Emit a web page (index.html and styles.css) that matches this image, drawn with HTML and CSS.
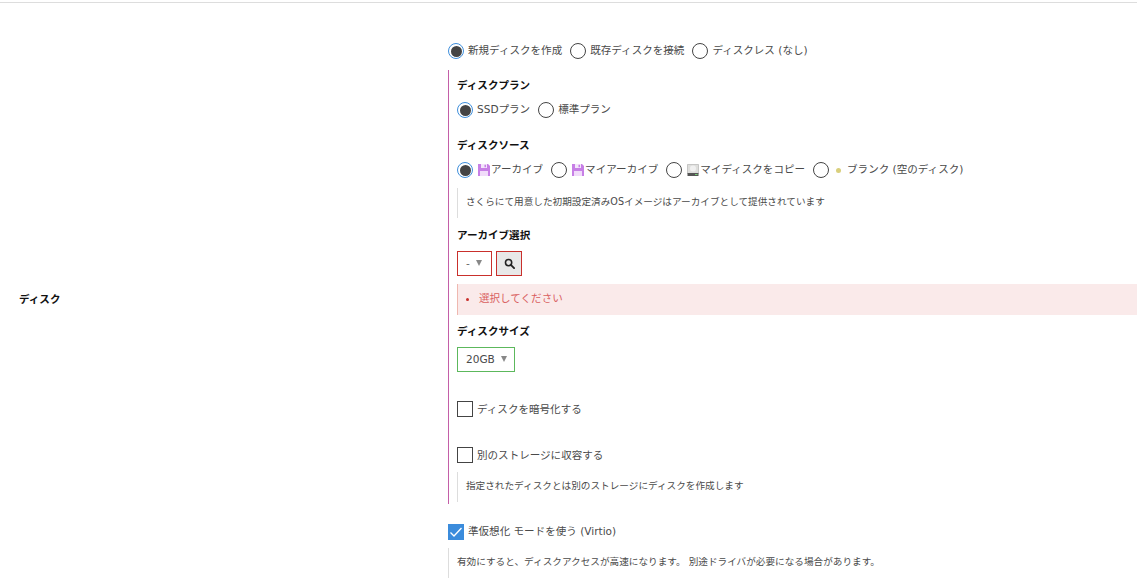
FILE: index.html
```html
<!DOCTYPE html>
<html lang="ja">
<head>
<meta charset="utf-8">
<title>ディスク</title>
<link rel="stylesheet" href="styles.css">
</head>
<body>
<div class="page">
  <div class="form-row">
    <div class="row-label">ディスク</div>
    <div class="row-body">
      <div class="radio-line top-line">
        <span class="radio on"></span><span class="opt">新規ディスクを作成</span>
        <span class="radio"></span><span class="opt">既存ディスクを接続</span>
        <span class="radio"></span><span class="opt">ディスクレス (なし)</span>
      </div>
      <div class="panel">
        <div class="heading h-plan">ディスクプラン</div>
        <div class="radio-line">
          <span class="radio on"></span><span class="opt">SSDプラン</span>
          <span class="radio"></span><span class="opt">標準プラン</span>
        </div>
        <div class="heading h-source">ディスクソース</div>
        <div class="radio-line">
          <span class="radio on"></span>
          <svg class="ico" viewBox="0 0 12 12"><path d="M0 0h10l2 2v10H0z" fill="#c77fe6"/><path d="M3 0h6v4H3z" fill="#f4e6fb"/><path d="M6.500 .8h1.500v2.400H6.500z" fill="#c77fe6"/><path d="M2 7h8v5H2z" fill="#f1dcfa"/></svg><span class="opt tight">アーカイブ</span>
          <span class="radio"></span>
          <svg class="ico" viewBox="0 0 12 12"><path d="M0 0h10l2 2v10H0z" fill="#c77fe6"/><path d="M3 0h6v4H3z" fill="#f4e6fb"/><path d="M6.500 .8h1.500v2.400H6.500z" fill="#c77fe6"/><path d="M2 7h8v5H2z" fill="#f1dcfa"/></svg><span class="opt tight">マイアーカイブ</span>
          <span class="radio"></span>
          <svg class="ico" viewBox="0 0 12 12"><path d="M.5 .5h11v9H.5z" fill="#dededc" stroke="#aaa" stroke-width=".6"/><circle cx="6" cy="4.500" r="3" fill="#f0f0f0"/><path d="M.5 9h11v3H.5z" fill="#555"/><path d="M8 10h2.500v1H8z" fill="#7c7"/></svg><span class="opt tight">マイディスクをコピー</span>
          <span class="radio"></span>
          <span class="dot"></span><span class="opt">ブランク (空のディスク)</span>
        </div>
        <div class="note note-source">さくらにて用意した初期設定済みOSイメージはアーカイブとして提供されています</div>
        <div class="heading h-archive">アーカイブ選択</div>
        <div class="select-line">
          <div class="select invalid sel-archive"><span>-</span><span class="caret"></span></div>
          <button class="search" type="button" aria-label="検索"><svg viewBox="0 0 12 12"><circle cx="5" cy="5" r="3.400" fill="none" stroke="#222" stroke-width="1.700"/><path d="M7.500 7.500 11 11" stroke="#222" stroke-width="2" stroke-linecap="round"/></svg></button>
        </div>
        <div class="error"><span class="bullet"></span><span class="error-text">選択してください</span></div>
        <div class="heading h-size">ディスクサイズ</div>
        <div class="select valid sel-size"><span>20GB</span><span class="caret"></span></div>
        <div class="check-line c-encrypt"><span class="check"></span><span class="opt">ディスクを暗号化する</span></div>
        <div class="check-line c-storage"><span class="check"></span><span class="opt">別のストレージに収容する</span></div>
        <div class="note note-storage">指定されたディスクとは別のストレージにディスクを作成します</div>
      </div>
      <div class="check-line c-virtio">
        <span class="check on"><svg viewBox="0 0 16 16"><path d="M2.500 8.500 6 12l7.500-8" fill="none" stroke="#fff" stroke-width="1.300"/></svg></span><span class="opt">準仮想化 モードを使う (Virtio)</span>
      </div>
      <div class="note note-virtio">有効にすると、ディスクアクセスが高速になります。 別途ドライバが必要になる場合があります。</div>
    </div>
  </div>
</div>
</body>
</html>
```

FILE: styles.css
```css
* { box-sizing: border-box; }
html, body { margin: 0; padding: 0; background: #fff; }
body {
  font-family: "DejaVu Sans", "Noto Sans CJK JP", sans-serif;
  font-size: 10.55px;
  color: #4a4a4a;
  overflow: hidden;
  height: 585px;
}
.page { border-top: 1px solid #ddd; margin-top: 2px; }
.form-row { display: flex; padding-top: 39px; }
.row-label {
  width: 448px;
  padding-left: 19px;
  display: flex;
  align-items: center;
  align-self: flex-start;
  height: 438px;
  padding-top: 74px;
  font-weight: 700;
  color: #111;
}
.row-body { flex: 1; min-width: 0; }
.radio-line { display: flex; align-items: center; height: 18px; white-space: nowrap; }
.radio {
  width: 16px; height: 16px; border-radius: 50%;
  border: 1px solid #444; background: #fff;
  flex: none; position: relative; margin-right: 4px;
}
.radio.on { border: 1.500px solid #3f8fdc; }
.radio.on::after {
  content: ""; position: absolute; inset: 1.500px;
  border-radius: 50%; background: #444;
}
.opt { margin-right: 8px; line-height: 18px; padding-bottom: 2px; }
.opt.tight { margin-left: 1px; }
.ico { width: 12px; height: 12px; flex: none; margin-left: 1px; }
.dot { width: 5px; height: 5px; border-radius: 50%; background: #d9cf7c; margin: 0 6px 0 3px; flex: none; }
.panel {
  border-left: 1px solid #c45fa8;
  margin-top: 10px;
  padding-left: 8px;
  height: 434px;
  display: flow-root;
}
.heading { font-weight: 700; color: #111; line-height: 16px; }
.h-plan { margin-top: 7px; }
.panel .radio-line { margin-top: 8px; }
.h-source { margin-top: 18px; }
.note {
  border-left: 1px solid #ddd;
  padding-left: 8px;
  height: 30px;
  line-height: 28px;
  font-size: 9.65px;
  white-space: nowrap;
}
.note-source { margin-top: 9px; }
.h-archive { margin-top: 9px; }
.select-line { display: flex; gap: 4px; margin-top: 8px; }
.select {
  height: 25px; border: 1px solid #ccc; display: flex; align-items: center;
  padding: 0 0 2px 8px; gap: 6px; background: #fff;
}
.select.invalid { border-color: #c9302c; color: #666; }
.select.valid { border-color: #5cb85c; }
.sel-archive { width: 35px; }
.sel-size { width: 58px; margin-top: 8px; }
.caret {
  width: 0; height: 0; border-left: 3.500px solid transparent;
  border-right: 3.500px solid transparent; border-top: 6px solid #888;
}
.search {
  width: 26px; height: 25px; padding: 0; border: 1px solid #c9302c;
  background: #e8e8e8; display: flex; align-items: center; justify-content: center;
}
.search svg { width: 11px; height: 11px; }
.error {
  margin-top: 8px; height: 31px; background: #faeaea;
  border-left: 1px solid #efb8b0; display: flex; align-items: center;
  color: #d9605f; padding-left: 8px;
}
.error-text { padding-bottom: 5px; }
.bullet { width: 3px; height: 3px; border-radius: 50%; background: #c9302c; margin-right: 10px; flex: none; }
.h-size { margin-top: 8px; }
.check-line { display: flex; align-items: center; height: 18px; white-space: nowrap; }
.check {
  width: 16px; height: 16px; border: 1px solid #444; background: #fff;
  flex: none; margin-right: 4px; display: block;
}
.check.on { background: #3b8cdc; border-color: #3b8cdc; }
.check.on svg { display: block; width: 16px; height: 16px; margin: -1px; }
.c-encrypt { margin-top: 28px; }
.c-storage { margin-top: 28px; }
.c-encrypt .opt, .c-storage .opt { padding-bottom: 0; }
.note-storage { margin-top: 8px; }
.c-virtio { margin-top: 19px; }
.note-virtio { margin-top: 7px; padding-left: 8px; }
```
